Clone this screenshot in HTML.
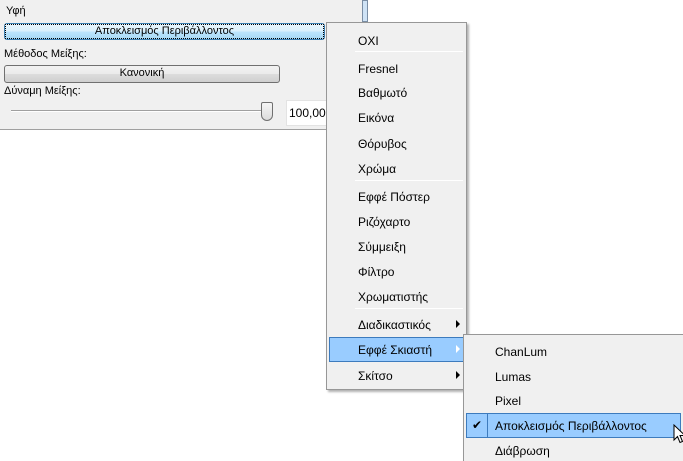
<!DOCTYPE html>
<html><head><meta charset="utf-8"><style>
*{margin:0;padding:0;box-sizing:border-box}
html,body{width:683px;height:461px;overflow:hidden}
body{position:relative;background:#fff;font-family:"Liberation Sans","DejaVu Sans",sans-serif;font-size:12px;color:#000}
.a{position:absolute}
.panel{left:0;top:0;width:362px;height:130px;background:#f0f0f0;border-bottom:1px solid #a0a0a0}
.btn{border:1px solid #707070;border-radius:3px;background:linear-gradient(#f2f2f2,#ebebeb 50%,#dddddd 51%,#cfcfcf);text-align:center;line-height:15px;font-size:11px}
.btn1{background:linear-gradient(#eaf6fd,#d9f0fc 50%,#bee6fd 51%,#a7d9f5);border-color:#3c7fb1}
.menu{background:#f0f0f0;border:1px solid #979797;box-shadow:2px 2px 2px rgba(0,0,0,.3)}
.it{position:absolute;left:31px;font-size:12px;line-height:14px}
.sep{position:absolute;left:28px;right:3px;height:1px;background:#bdbdbd;border-bottom:1px solid #fff}
.hl{position:absolute;background:#99ccff;border:1px solid #3d7bbd}
.arr{position:absolute;width:0;height:0;border-left:4px solid #000;border-top:4px solid transparent;border-bottom:4px solid transparent}
</style></head><body>
<div class="a panel">
 <div class="a" style="left:6px;top:5px;font-size:11px">Υφή</div>
 <div class="a btn btn1" style="left:4px;top:23px;width:321px;height:17px"><span style="outline:1px dotted #000;outline-offset:0;display:block;margin:1px;line-height:13px">Αποκλεισμός Περιβάλλοντος</span></div>
 <div class="a" style="left:4px;top:48px;font-size:11px">Μέθοδος Μείξης:</div>
 <div class="a btn" style="left:4px;top:65px;width:276px;height:18px">Κανονική</div>
 <div class="a" style="left:4px;top:85px;font-size:11px">Δύναμη Μείξης:</div>
 <div class="a" style="left:11px;top:110px;width:256px;height:2px;border-top:1px solid #a0a0a0;border-bottom:1px solid #fff"></div>
 <div class="a" style="left:261px;top:102px;width:12px;height:19px;border:1px solid #707070;border-radius:2px 2px 6px 6px;background:linear-gradient(#f5f5f5,#dcdcdc)"></div>
 <div class="a" style="left:286px;top:100px;width:44px;height:26px;background:#fff;border:1px solid #e3e3e3;line-height:24px;padding-left:2px;font-size:12px">100,00</div>
</div>
<div class="a" style="left:362px;top:0;width:6px;height:22px;background:#cfe3f6;border:1px solid #7a8ea5"></div>

<div class="a menu" style="left:326px;top:22px;width:141px;height:368px">
 <div class="it" style="top:11px">OXI</div>
 <div class="sep" style="top:28px"></div>
 <div class="it" style="top:39px">Fresnel</div>
 <div class="it" style="top:63px">Βαθμωτό</div>
 <div class="it" style="top:88px">Εικόνα</div>
 <div class="it" style="top:114px">Θόρυβος</div>
 <div class="it" style="top:139px">Χρώμα</div>
 <div class="sep" style="top:157px"></div>
 <div class="it" style="top:167px">Εφφέ Πόστερ</div>
 <div class="it" style="top:192px">Ριζόχαρτο</div>
 <div class="it" style="top:217px">Σύμμειξη</div>
 <div class="it" style="top:242px">Φίλτρο</div>
 <div class="it" style="top:267px">Χρωματιστής</div>
 <div class="sep" style="top:285px"></div>
 <div class="it" style="top:295px">Διαδικαστικός</div>
 <div class="arr" style="left:129px;top:297px"></div>
 <div class="hl" style="left:2px;top:314px;width:137px;height:25px"></div>
 <div class="it" style="top:320px">Εφφέ Σκιαστή</div>
 <div class="arr" style="left:129px;top:322px;border-left-color:#fff"></div>
 <div class="it" style="top:346px">Σκίτσο</div>
 <div class="arr" style="left:129px;top:348px"></div>
</div>

<div class="a menu" style="left:463px;top:334px;width:230px;height:140px">
 <div class="it" style="top:10px">ChanLum</div>
 <div class="it" style="top:35px">Lumas</div>
 <div class="it" style="top:59px">Pixel</div>
 <div class="hl" style="left:2px;top:78px;width:215px;height:25px"></div>
 <div class="a" style="left:2px;top:78px;width:22px;height:25px;border:1px solid #3d7bbd;background:#99ccff;text-align:center;line-height:23px;font-size:12px">✔</div>
 <div class="it" style="top:84px">Αποκλεισμός Περιβάλλοντος</div>
 <svg class="a" style="left:209px;top:89px" width="14" height="22" viewBox="0 0 14 22"><path d="M1 1 L1 16 L4.5 12.5 L7 18.5 L9.5 17.5 L7 11.5 L12 11.5 Z" fill="#fff" stroke="#000" stroke-width="1"/></svg>
 <div class="it" style="top:109px">Διάβρωση</div>
</div>
</body></html>
